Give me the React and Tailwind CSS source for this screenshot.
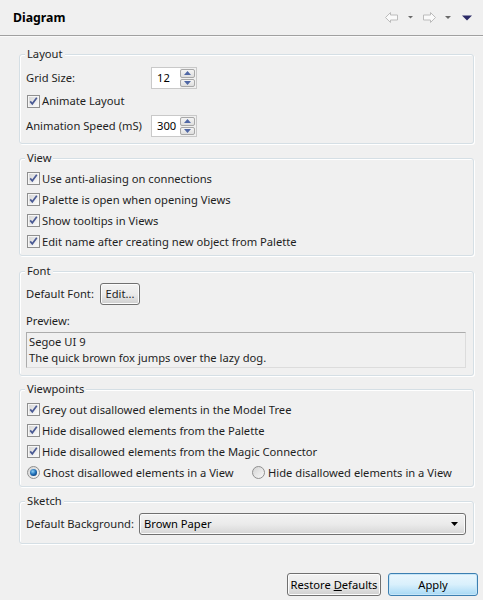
import React from 'react';

const Check = () => (
  <svg width="13" height="13" viewBox="0 0 13 13" className="shrink-0">
    <defs>
      <linearGradient id="cbg" x1="0" y1="0" x2="1" y2="1">
        <stop offset="0" stopColor="#d6d6d6" />
        <stop offset="1" stopColor="#fbfbfb" />
      </linearGradient>
    </defs>
    <rect x="0.5" y="0.5" width="12" height="12" fill="#f6f6f6" stroke="#8f8f8f" />
    <rect x="2" y="2" width="9" height="9" fill="url(#cbg)" />
    <path d="M3.2 6.4 L5.3 8.8 L9.8 2.8" stroke="#4a5a94" strokeWidth="1.7" fill="none" />
  </svg>
);

const Radio = ({ on }) => (
  <svg width="13" height="13" viewBox="0 0 13 13" className="shrink-0">
    <defs>
      <radialGradient id="rdot" cx="0.4" cy="0.35" r="0.7">
        <stop offset="0" stopColor="#8fd0f5" />
        <stop offset="0.6" stopColor="#1f6fb8" />
        <stop offset="1" stopColor="#0d3f7a" />
      </radialGradient>
      <linearGradient id="rbg" x1="0" y1="0" x2="1" y2="1">
        <stop offset="0" stopColor="#d2d2d2" />
        <stop offset="1" stopColor="#fafafa" />
      </linearGradient>
    </defs>
    <circle cx="6.5" cy="6.5" r="6" fill="url(#rbg)" stroke="#8f8f8f" />
    {on && <circle cx="6.5" cy="6.5" r="3.5" fill="url(#rdot)" />}
  </svg>
);

const Spinner = ({ value }) => (
  <div className="flex h-[22px] w-[46px] shrink-0 items-stretch border border-[#c9c9c9] bg-white">
    <div className="flex flex-1 items-center pl-[5px] text-black">{value}</div>
    <div className="flex w-[16px] flex-col gap-[1px] bg-[#f0f0f0] py-[1px] pr-[1px]">
      <div className="flex flex-1 items-center justify-center rounded-[2px] border border-[#a8a8a8] bg-gradient-to-b from-[#f4f4f4] to-[#dedede]">
        <svg width="7" height="4" viewBox="0 0 7 4"><path d="M0 4 L3.5 0 L7 4 Z" fill="#4f67a5" /></svg>
      </div>
      <div className="flex flex-1 items-center justify-center rounded-[2px] border border-[#a8a8a8] bg-gradient-to-b from-[#f4f4f4] to-[#dedede]">
        <svg width="7" height="4" viewBox="0 0 7 4"><path d="M0 0 L7 0 L3.5 4 Z" fill="#4f67a5" /></svg>
      </div>
    </div>
  </div>
);

const Group = ({ title, className, children }) => (
  <div className={`relative mx-[19px] mr-[9px] rounded-[3px] border border-[#d5dfe5] shadow-[inset_1px_1px_0_#fff,1px_1px_0_#fff] pl-[6px] pr-[7px] ${className}`}>
    <span className="absolute -top-[8px] left-[5px] bg-[#f0f0f0] px-[2px] leading-[14px]">{title}</span>
    {children}
  </div>
);

const CheckRow = ({ label }) => (
  <div className="flex h-[21px] items-center gap-[2px] pl-[1px]">
    <Check />
    <span>{label}</span>
  </div>
);

const WinButton = ({ children, className }) => (
  <div className={`flex shrink-0 items-center justify-center rounded-[3px] border border-[#707070] bg-gradient-to-b from-[#f2f2f2] via-[#ebebeb] to-[#cfcfcf] shadow-[inset_0_0_0_1px_#fcfcfc] ${className}`}>
    {children}
  </div>
);

const App = () => {
  return (
    <div className="h-[600px] w-[483px] overflow-hidden whitespace-nowrap bg-[#f0f0f0] font-['Noto_Sans',sans-serif] text-[11.2px] leading-[16px] text-[#1e1e1e]">
      {/* header */}
      <div className="flex h-[36px] items-center justify-between border-b border-[#a0a0a0] pl-[13px] pr-[10px] shadow-[0_1px_0_#fafafa]">
        <span className="text-[12.3px] font-bold text-black">Diagram</span>
        <svg width="88" height="12" viewBox="0 0 88 12">
          <path d="M0.5 5.5 L5.5 0.5 L5.5 3 L12.5 3 L12.5 8 L5.5 8 L5.5 10.5 Z" fill="#fafafa" stroke="#bcbcbc" />
          <path d="M23 4 L28 4 L25.5 6.5 Z" fill="#6a6a6a" />
          <path d="M50.5 5.5 L45.5 0.5 L45.5 3 L38.5 3 L38.5 8 L45.5 8 L45.5 10.5 Z" fill="#fafafa" stroke="#bcbcbc" />
          <path d="M60 4 L66 4 L63 7 Z" fill="#6a6a6a" />
          <path d="M77 3.5 L87 3.5 L82 8.5 Z" fill="#2b2a66" />
        </svg>
      </div>

      {/* Layout */}
      <Group title="Layout" className="mt-[18px] pt-[12px] pb-[6px]">
        <div className="flex h-[22px] items-center">
          <span className="w-[125px]">Grid Size:</span>
          <Spinner value="12" />
        </div>
        <div className="mt-[2px] flex h-[20px] items-center gap-[2px] pl-[1px]">
          <Check />
          <span>Animate Layout</span>
        </div>
        <div className="mt-[4px] flex h-[22px] items-center">
          <span className="w-[125px]">Animation Speed (mS)</span>
          <Spinner value="300" />
        </div>
      </Group>

      {/* View */}
      <Group title="View" className="mt-[14px] pt-[9px] pb-[3px]">
        <CheckRow label="Use anti-aliasing on connections" />
        <CheckRow label="Palette is open when opening Views" />
        <CheckRow label="Show tooltips in Views" />
        <CheckRow label="Edit name after creating new object from Palette" />
      </Group>

      {/* Font */}
      <Group title="Font" className="mt-[15px] pt-[11px] pb-[7px]">
        <div className="flex h-[22px] items-center">
          <span className="w-[74px]">Default Font:</span>
          <WinButton className="h-[22px] w-[40px]">Edit...</WinButton>
        </div>
        <div className="mt-[6px] flex h-[20px] items-center">Preview:</div>
        <div className="mt-[1px] h-[36px] border border-[#acacac] border-r-[#dcdcdc] border-b-[#dcdcdc] pl-[2px] pt-[1px]">
          <div>Segoe UI 9</div>
          <div>The quick brown fox jumps over the lazy dog.</div>
        </div>
      </Group>

      {/* Viewpoints */}
      <Group title="Viewpoints" className="mt-[13px] pt-[9px] pb-[3px]">
        <CheckRow label="Grey out disallowed elements in the Model Tree" />
        <CheckRow label="Hide disallowed elements from the Palette" />
        <CheckRow label="Hide disallowed elements from the Magic Connector" />
        <div className="flex h-[21px] items-center pl-[1px]">
          <div className="flex w-[225px] items-center gap-[3px]">
            <Radio on />
            <span>Ghost disallowed elements in a View</span>
          </div>
          <div className="flex items-center gap-[3px]">
            <Radio />
            <span>Hide disallowed elements in a View</span>
          </div>
        </div>
      </Group>

      {/* Sketch */}
      <Group title="Sketch" className="mt-[14px] pt-[11px] pb-[8px]">
        <div className="flex h-[22px] items-center">
          <span className="w-[113px]">Default Background:</span>
          <div className="flex h-[22px] flex-1 items-center justify-between rounded-[3px] border border-[#707070] bg-gradient-to-b from-[#f2f2f2] via-[#ebebeb] to-[#d6d6d6] pl-[4px] pr-[7px] shadow-[inset_0_0_0_1px_#fbfbfb]">
            <span className="text-black">Brown Paper</span>
            <svg width="7" height="4" viewBox="0 0 7 4"><path d="M0 0 L7 0 L3.5 4 Z" fill="#000" /></svg>
          </div>
        </div>
      </Group>

      {/* buttons */}
      <div className="mt-[29px] flex justify-end gap-[7px] pr-[5px] text-black">
        <WinButton className="h-[23px] w-[94px]">
          <span>Restore <u>D</u>efaults</span>
        </WinButton>
        <div className="flex h-[23px] w-[90px] items-center justify-center rounded-[3px] border border-[#3c7fb1] bg-gradient-to-b from-[#eaf6fd] via-[#d9f0fc] to-[#a7d9f5] shadow-[inset_0_0_0_1px_#c6e6f8]">
          Apply
        </div>
      </div>
    </div>
  );
};

export default App;
